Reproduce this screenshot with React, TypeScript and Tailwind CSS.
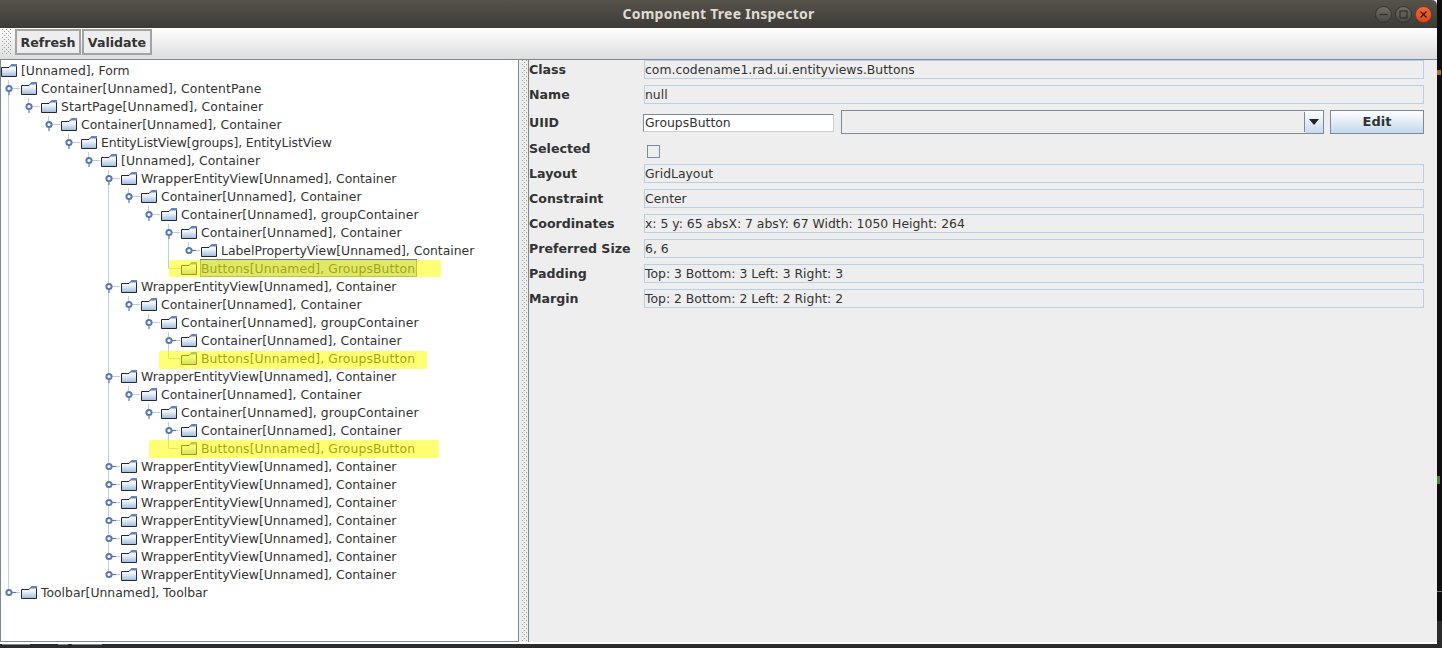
type Row = { d: number; t: string; h?: 'o' | 'c'; sel?: boolean; mark?: string };

const W = 'WrapperEntityView[Unnamed], Container';
const C = 'Container[Unnamed], Container';
const G = 'Container[Unnamed], groupContainer';
const B = 'Buttons[Unnamed], GroupsButton';

const rows: Row[] = [
  { d: 0, t: '[Unnamed], Form' },
  { d: 1, t: 'Container[Unnamed], ContentPane', h: 'o' },
  { d: 2, t: 'StartPage[Unnamed], Container', h: 'o' },
  { d: 3, t: C, h: 'o' },
  { d: 4, t: 'EntityListView[groups], EntityListView', h: 'o' },
  { d: 5, t: '[Unnamed], Container', h: 'o' },
  { d: 6, t: W, h: 'o' },
  { d: 7, t: C, h: 'o' },
  { d: 8, t: G, h: 'o' },
  { d: 9, t: C, h: 'o' },
  { d: 10, t: 'LabelPropertyView[Unnamed], Container', h: 'c' },
  { d: 9, t: B, sel: true, mark: 'left-[168px] top-[0px] w-[272px] h-[17px]' },
  { d: 6, t: W, h: 'o' },
  { d: 7, t: C, h: 'o' },
  { d: 8, t: G, h: 'o' },
  { d: 9, t: C, h: 'c' },
  { d: 9, t: B, mark: 'left-[158px] top-[1px] w-[268px] h-[18px]' },
  { d: 6, t: W, h: 'o' },
  { d: 7, t: C, h: 'o' },
  { d: 8, t: G, h: 'o' },
  { d: 9, t: C, h: 'c' },
  { d: 9, t: B, mark: 'left-[148px] top-[0px] w-[290px] h-[18px]' },
  { d: 6, t: W, h: 'c' },
  { d: 6, t: W, h: 'c' },
  { d: 6, t: W, h: 'c' },
  { d: 6, t: W, h: 'c' },
  { d: 6, t: W, h: 'c' },
  { d: 6, t: W, h: 'c' },
  { d: 6, t: W, h: 'c' },
  { d: 1, t: 'Toolbar[Unnamed], Toolbar', h: 'c' },
];

const tracking: Record<string, string> = {
  'Container[Unnamed], ContentPane': 'tracking-[0.1px]',
  'StartPage[Unnamed], Container': 'tracking-[0.14px]',
  'EntityListView[groups], EntityListView': '-tracking-[0.1px]',
  '[Unnamed], Container': 'tracking-[0.05px]',
  [W]: '-tracking-[0.03px]',
  [C]: 'tracking-[0.07px]',
  [G]: 'tracking-[0.09px]',
  [B]: 'tracking-[0.1px]',
};

function hasLaterSibling(r: number, level: number) {
  for (let k = r + 1; k < rows.length; k++) {
    if (rows[k].d < level) return false;
    if (rows[k].d === level) return true;
  }
  return false;
}

function Guide({ r, col }: { r: number; col: number }) {
  const row = rows[r];
  const level = col + 1;
  const own = row.d === level;
  const cont = hasLaterSibling(r, level);
  return (
    <svg width="20" height="18" className="shrink-0 block">
      {own && <line x1="7.5" y1="0" x2="7.5" y2={cont ? 18 : 8} stroke="#b8cfe5" />}
      {!own && cont && <line x1="7.5" y1="0" x2="7.5" y2="18" stroke="#b8cfe5" />}
      {own && <line x1="7.5" y1="8.5" x2="19" y2="8.5" stroke="#b8cfe5" />}
      {own && row.h && (
        <>
          <circle cx="8" cy="8.5" r="2.6" fill="#fff" stroke="#5878b8" strokeWidth="2" />
          {row.h === 'o' ? (
            <line x1="8" y1="11" x2="8" y2="15" stroke="#5878b8" strokeWidth="1.2" />
          ) : (
            <line x1="10" y1="8.5" x2="15" y2="8.5" stroke="#5878b8" strokeWidth="1.2" />
          )}
        </>
      )}
    </svg>
  );
}

function Folder() {
  return (
    <svg width="16" height="13" viewBox="0 0 16 13" className="block mt-[2px]">
      <defs>
        <linearGradient id="folderFill" x1="0" y1="0" x2="0" y2="1">
          <stop offset="0" stopColor="#ffffff" />
          <stop offset="0.35" stopColor="#eef3fa" />
          <stop offset="1" stopColor="#9dbbdd" />
        </linearGradient>
      </defs>
      <path d="M0.5 3.5H8L10 1.5H15.5V12.5H0.5Z" fill="url(#folderFill)" stroke="#26262b" />
      <path d="M8.5 2.5L10.5 0H16V2.5Z" fill="#6382bf" />
    </svg>
  );
}

function TreeRow({ r }: { r: number }) {
  const row = rows[r];
  const tr = tracking[row.t] ?? '';
  return (
    <div className="relative flex items-start h-[18px] whitespace-nowrap">
      {Array.from({ length: row.d }, (_, col) => (
        <Guide key={col} r={r} col={col} />
      ))}
      <div className="w-[20px] shrink-0">
        <Folder />
      </div>
      <span className={'relative h-[18px] leading-[18px] ' + tr}>
        {row.sel && (
          <span className="absolute -left-px -right-[2px] -top-px h-[18px] bg-[#b8cfe5] ring-1 ring-inset ring-[#6d7c8c]" />
        )}
        <span className="relative">{row.t}</span>
      </span>
      {row.mark && <div className={'absolute bg-[#ffff00]/55 rounded-[2px] ' + row.mark} />}
    </div>
  );
}

function Dots({ w, h, id }: { w: number; h: number; id: string }) {
  return (
    <svg width={w} height={h} className="block">
      <defs>
        <pattern id={id} width="4" height="4" patternUnits="userSpaceOnUse">
          <rect x="0" y="0" width="1" height="1" fill="#9a9a9a" />
          <rect x="2" y="2" width="1" height="1" fill="#9a9a9a" />
        </pattern>
      </defs>
      <rect width={w} height={h} fill={`url(#${id})`} />
    </svg>
  );
}

function ToolButton({ label, w }: { label: string; w: string }) {
  return (
    <button
      className={
        'h-[26px] pt-[2px] border-2 border-[#a3a3a3] bg-[#eeeeee] text-[12.6px] font-bold text-[#333333] ' + w
      }
    >
      {label}
    </button>
  );
}

function Field({ label, value }: { label: string; value: string }) {
  return (
    <div className="flex h-[19px] items-center">
      <div className="w-[115px] shrink-0 mt-[2px] font-bold text-[12.6px] text-[#333333]">{label}</div>
      <div className="flex-1 h-[19px] border border-[#b8cfe5] bg-[#eeeeee] leading-[18px] text-[#333333]">
        {value}
      </div>
    </div>
  );
}

function WinButton({ kind }: { kind: 'min' | 'max' | 'close' }) {
  const bg =
    kind === 'close'
      ? 'bg-[linear-gradient(#f0683a,#e0491c)] border-[#7d3a20]'
      : 'bg-[linear-gradient(#6f6d65,#4a4843)] border-[#35332f]';
  return (
    <div className={'w-[17px] h-[17px] rounded-full border flex items-center justify-center ' + bg}>
      <svg width="9" height="9" viewBox="0 0 9 9">
        {kind === 'min' && <line x1="0.5" y1="4.5" x2="8.5" y2="4.5" stroke="#2f2e2a" strokeWidth="1.2" />}
        {kind === 'max' && <rect x="1" y="1" width="7" height="7" fill="none" stroke="#2f2e2a" strokeWidth="1.1" />}
        {kind === 'close' && <path d="M1.5 1.5L7.5 7.5M7.5 1.5L1.5 7.5" stroke="#3a2016" strokeWidth="1.4" />}
      </svg>
    </div>
  );
}

export default function App() {
  return (
    <div className="w-[1442px] h-[648px] overflow-hidden flex flex-col bg-[#2b2b2b] font-['DejaVu_Sans',sans-serif] text-[12.4px] text-[#333333]">
      <div className="flex h-[644px] shrink-0">
        <div className="w-[1437px] shrink-0 flex flex-col bg-white">
          {/* Title bar */}
          <div className="h-[28px] shrink-0 grid grid-cols-[1fr_auto_1fr] items-center bg-[linear-gradient(#56534b,#3c3b37)] rounded-tr-[5px]">
            <div />
            <div className="-mt-[2px] font-['Noto_Sans',sans-serif] font-bold text-[14px] text-[#dfdbd2] tracking-[0.25px]">
              Component Tree Inspector
            </div>
            <div className="flex justify-end gap-[3px] pr-[5px]">
              <WinButton kind="min" />
              <WinButton kind="max" />
              <WinButton kind="close" />
            </div>
          </div>
          {/* Toolbar */}
          <div className="h-[31px] shrink-0 flex items-start bg-[linear-gradient(#ffffff,#dddddd)]">
            <div className="ml-[2px] mt-[1px] w-[13px]">
              <Dots w={9} h={26} id="gripA" />
            </div>
            <div className="flex gap-[1px] mt-[1px]">
              <ToolButton label="Refresh" w="w-[66px]" />
              <ToolButton label="Validate" w="w-[70px]" />
            </div>
          </div>
          {/* Split */}
          <div className="flex-1 min-h-0 flex flex-col border-t border-[#7a8a99]">
            <div className="flex-1 min-h-0 flex">
              <div className="w-[519px] shrink-0 bg-white border-x border-b border-[#7a8a99] pt-[2px]">
                {rows.map((_, r) => (
                  <TreeRow key={r} r={r} />
                ))}
              </div>
              <div className="w-[9px] shrink-0 bg-[#eeeeee] pl-[3px]">
                <Dots w={5} h={582} id="gripB" />
              </div>
              <div className="flex-1 bg-[#eeeeee] border-l border-[#7a8a99] flex flex-col gap-[6px] pr-[13px]">
                <Field label="Class" value="com.codename1.rad.ui.entityviews.Buttons" />
                <Field label="Name" value="null" />
                <div className="flex h-[24px] items-center">
                  <div className="w-[114px] mt-[3px] shrink-0 font-bold text-[12.6px]">UIID</div>
                  <div className="w-[191px] h-[18px] mt-[2px] shrink-0 bg-white border border-[#7a8a99] border-r-[#d0d0d0] border-b-[#d0d0d0] pl-[1px] leading-[16px]">
                    GroupsButton
                  </div>
                  <div className="ml-[7px] w-[483px] h-[24px] shrink-0 flex border border-[#7a8a99] bg-[#eeeeee]">
                    <div className="flex-1 border-r border-[#7a8a99] m-[1px] mr-0" />
                    <div className="w-[18px] flex items-center justify-center bg-[linear-gradient(#ffffff,#c6daee)]">
                      <svg width="10" height="6" viewBox="0 0 10 6">
                        <path d="M0 0H10L5 6Z" fill="#222222" />
                      </svg>
                    </div>
                  </div>
                  <button className="ml-[6px] w-[94px] h-[24px] shrink-0 border border-[#7a8a99] bg-[linear-gradient(#ffffff,#c3d8ec)] font-bold text-[13px] text-[#333333]">
                    Edit
                  </button>
                </div>
                <div className="flex h-[18px] items-start">
                  <div className="w-[118px] shrink-0 font-bold text-[12.6px]">Selected</div>
                  <div className="mt-[5px] w-[13px] h-[13px] border border-[#7a8a99] bg-[#eeeeee]" />
                </div>
                <Field label="Layout" value="GridLayout" />
                <Field label="Constraint" value="Center" />
                <Field label="Coordinates" value="x: 5 y: 65 absX: 7 absY: 67 Width: 1050 Height: 264" />
                <Field label="Preferred Size" value="6, 6" />
                <Field label="Padding" value="Top: 3 Bottom: 3 Left: 3 Right: 3" />
                <Field label="Margin" value="Top: 2 Bottom: 2 Left: 2 Right: 2" />
              </div>
            </div>
            <div className="h-[2px] shrink-0 bg-white" />
          </div>
        </div>
        {/* Desktop behind the window */}
        <div className="flex-1 flex flex-col bg-[#0e0e0e]">
          <div className="h-[70px] shrink-0" />
          <div className="h-[5px] w-[4px] shrink-0 bg-[#a8742c]" />
          <div className="h-[401px] shrink-0" />
          <div className="h-[8px] w-[3px] shrink-0 bg-[#3f8a3a]" />
          <div className="h-[107px] shrink-0" />
          <div className="h-[1px] shrink-0 bg-[#777777]" />
          <div className="h-[29px] shrink-0" />
          <div className="flex-1 bg-[#2b2b2b]" />
        </div>
      </div>
      {/* Sliver of the window below */}
      <div className="h-[4px] flex items-start gap-[4px] pl-[2px]">
        <div className="w-[28px] h-[1px] bg-[#8a8a8a]" />
        <div className="ml-[24px] w-[10px] h-[1px] bg-[#8a8a8a]" />
        <div className="w-[30px] h-[1px] bg-[#8a8a8a]" />
      </div>
    </div>
  );
}
